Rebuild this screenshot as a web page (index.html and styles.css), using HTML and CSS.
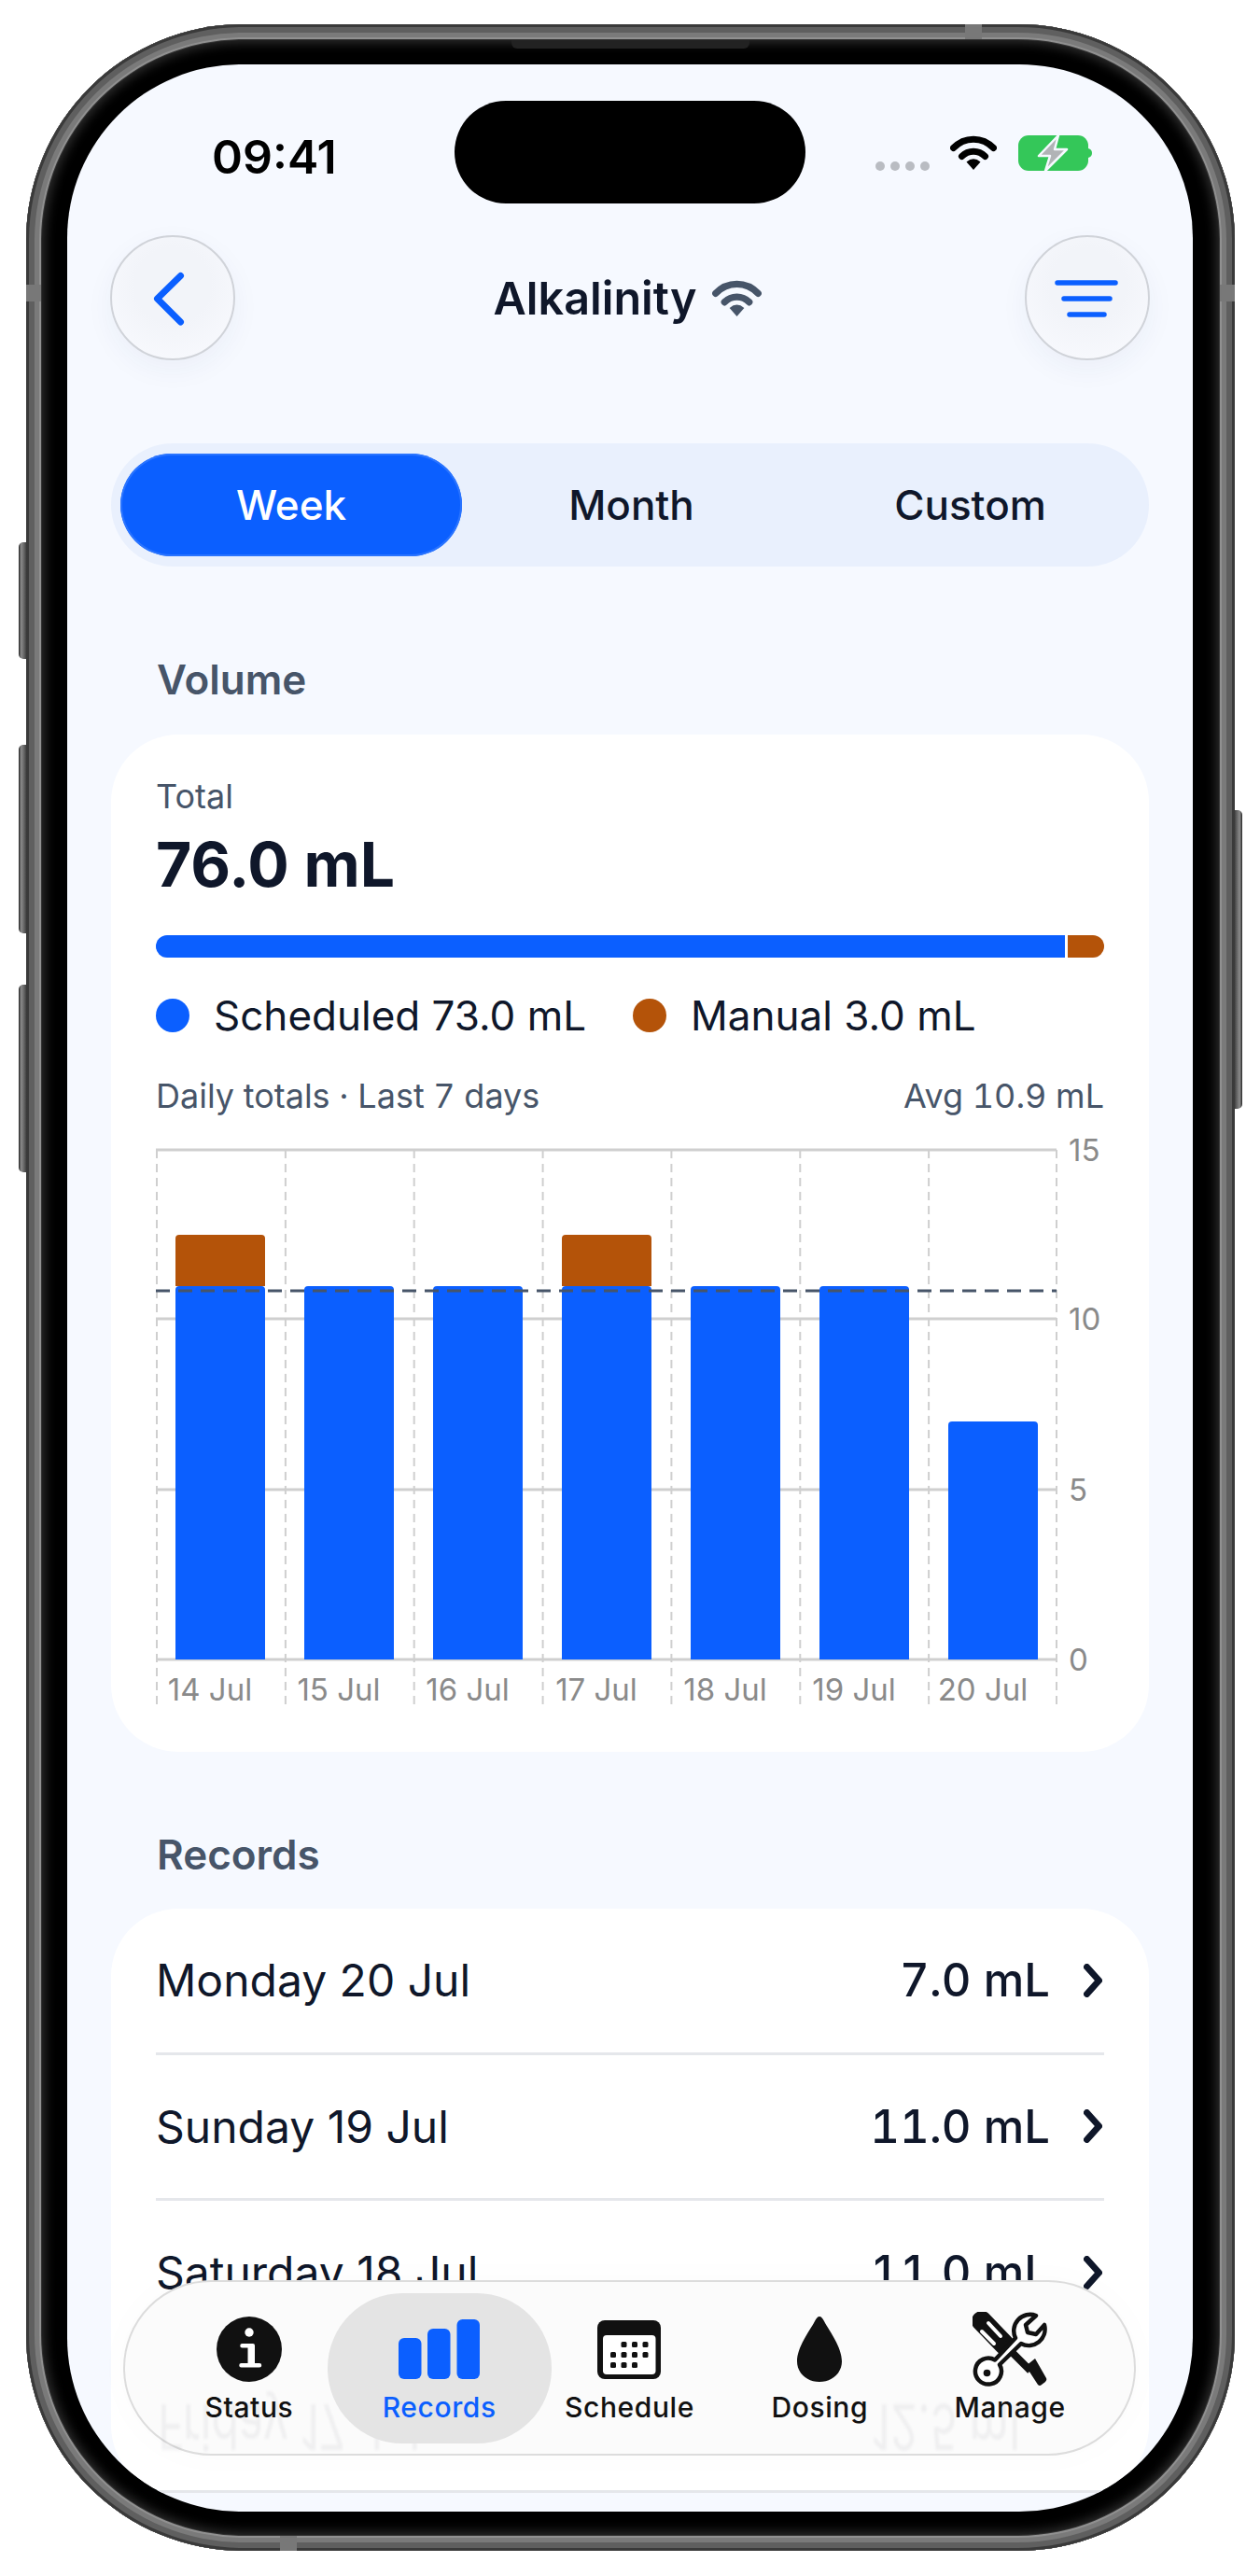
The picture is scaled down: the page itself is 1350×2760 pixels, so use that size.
FILE: index.html
```html
<!DOCTYPE html>
<html>
<head>
  <title>Alkalinity</title>
  <link rel="stylesheet" href="styles.css">
</head>
<body>
  <div class="phone">
    <!-- Hardware bits around the frame -->
    <span class="side-btn btn-action"></span>
    <span class="side-btn btn-up"></span>
    <span class="side-btn btn-down"></span>
    <span class="side-btn btn-power"></span>
    <span class="band band-top"></span>
    <span class="band band-left"></span>
    <span class="band band-right"></span>
    <span class="band band-bottom"></span>
    <span class="speaker"></span>

    <div class="screen">
      <!-- Status bar -->
      <div class="status-bar">
        <div class="time">09:41</div>
        <div class="island"></div>
        <div class="status-icons">
          <div class="signal-dots"><i></i><i></i><i></i><i></i></div>
          <svg class="status-wifi" viewBox="0 0 50 37"><path class="wifi-arc" d="M3.5 13.5C15.5 1 34.5 1 46.5 13.5"/><path class="wifi-arc" d="M12.5 22.5C19.5 15.5 30.5 15.5 37.5 22.5"/><path class="wifi-dot" d="M25 37L17.5 28.5Q25 22 32.5 28.5Z"/></svg>
          <svg class="battery" viewBox="0 0 80 40"><rect class="battery-body" x="0" y="1" width="75" height="38" rx="11"/><path class="battery-body" d="M75 15q4 1 4 5t-4 5z"/><path class="battery-bolt" d="M43 1L22 23H34L29 39L52 16H39Z"/></svg>
        </div>
      </div>

      <!-- Header -->
      <div class="header">
        <button class="round-btn">
          <svg viewBox="0 0 130 130"><path class="back-arrow" d="M73.5 41.5L48.5 66L73.5 91"/></svg>
        </button>
        <div class="title">
          Alkalinity
          <svg class="title-wifi" viewBox="0 0 50 37"><path class="wifi-arc" d="M3.5 13.5C15.5 1 34.5 1 46.5 13.5"/><path class="wifi-arc" d="M12.5 22.5C19.5 15.5 30.5 15.5 37.5 22.5"/><path class="wifi-dot" d="M25 37L17.5 28.5Q25 22 32.5 28.5Z"/></svg>
        </div>
        <button class="round-btn">
          <svg viewBox="0 0 130 130"><path class="filter-lines" d="M33 49H95M40 66H89M46 83H83"/></svg>
        </button>
      </div>

      <div class="content">
        <!-- Range switch -->
        <div class="segments">
          <div class="segment active">Week</div>
          <div class="segment">Month</div>
          <div class="segment">Custom</div>
        </div>

        <!-- Volume -->
        <div class="section-label">Volume</div>
        <div class="card volume-card">
          <div class="total-label">Total</div>
          <div class="total-value">76.0 mL</div>
          <div class="total-bar">
            <div class="bar-scheduled"></div>
            <div class="bar-manual"></div>
          </div>
          <div class="legend">
            <div class="legend-item"><span class="dot dot-blue"></span>Scheduled 73.0 mL</div>
            <div class="legend-item"><span class="dot dot-orange"></span>Manual 3.0 mL</div>
          </div>
          <div class="chart-head">
            <span>Daily totals · Last 7 days</span>
            <span>Avg 10.9 mL</span>
          </div>
          <svg class="chart" viewBox="0 0 1016 630">
            <path class="grid-h" d="M0 22H965M0 203H965M0 386H965M0 568H965"/>
            <path class="grid-v" d="M1 22V617M138.9 22V617M276.7 22V617M414.6 22V617M552.4 22V617M690.3 22V617M828.1 22V617M965 22V617"/>
            <path class="bar-blue" d="M21 568V172q0-4 4-4h88q4 0 4 4V568Z"/>
            <path class="bar-orange" d="M21 168V117q0-4 4-4h88q4 0 4 4V168Z"/>
            <path class="bar-blue" d="M159 568V172q0-4 4-4h88q4 0 4 4V568Z"/>
            <path class="bar-blue" d="M297 568V172q0-4 4-4h88q4 0 4 4V568Z"/>
            <path class="bar-blue" d="M435 568V172q0-4 4-4h88q4 0 4 4V568Z"/>
            <path class="bar-orange" d="M435 168V117q0-4 4-4h88q4 0 4 4V168Z"/>
            <path class="bar-blue" d="M573 568V172q0-4 4-4h88q4 0 4 4V568Z"/>
            <path class="bar-blue" d="M711 568V172q0-4 4-4h88q4 0 4 4V568Z"/>
            <path class="bar-blue" d="M849 568V317q0-4 4-4h88q4 0 4 4V568Z"/>
            <path class="avg-line" d="M0 173H965"/>
            <text class="axis-x" x="58" y="612">14 Jul</text>
            <text class="axis-x" x="196" y="612">15 Jul</text>
            <text class="axis-x" x="334" y="612">16 Jul</text>
            <text class="axis-x" x="472" y="612">17 Jul</text>
            <text class="axis-x" x="610" y="612">18 Jul</text>
            <text class="axis-x" x="748" y="612">19 Jul</text>
            <text class="axis-x" x="886" y="612">20 Jul</text>
            <text class="axis-y" x="978" y="34">15</text>
            <text class="axis-y" x="978" y="215">10</text>
            <text class="axis-y" x="978" y="398">5</text>
            <text class="axis-y" x="978" y="580">0</text>
          </svg>
        </div>

        <!-- Records -->
        <div class="section-label records-label">Records</div>
        <div class="card records-card">
          <div class="row"><span>Monday 20 Jul</span><span class="row-value">7.0 mL</span><svg class="chevron" viewBox="0 0 20 36"><path d="M3.5 3.5L16.5 18L3.5 32.5"/></svg></div>
          <div class="row"><span>Sunday 19 Jul</span><span class="row-value">11.0 mL</span><svg class="chevron" viewBox="0 0 20 36"><path d="M3.5 3.5L16.5 18L3.5 32.5"/></svg></div>
          <div class="row"><span>Saturday 18 Jul</span><span class="row-value">11.0 mL</span><svg class="chevron" viewBox="0 0 20 36"><path d="M3.5 3.5L16.5 18L3.5 32.5"/></svg></div>
          <div class="row"></div>
        </div>
      </div>

      <!-- Floating tab bar -->
      <div class="tab-bar">
        <div class="tab-ghost"><span>Friday 17 Jul</span><span class="ghost-value">12.5 mL</span></div>

        <div class="tab">
          <div class="tab-icon">
            <svg width="70" height="70" viewBox="0 0 70 70"><circle cx="35" cy="35" r="35" fill="#111"/><circle cx="35" cy="17" r="4.7" fill="#fff"/><path fill="#fff" d="M27.5 29h11.5a2 2 0 0 1 2 2v19h5a2 2 0 0 1 0 4.5H26.5a2 2 0 0 1 0-4.5h7V33.5h-6a2.2 2.2 0 0 1 0-4.500z"/></svg>
          </div>
          <div class="tab-name">Status</div>
        </div>

        <div class="tab active">
          <div class="tab-icon">
            <svg width="88" height="64" viewBox="0 0 88 64" fill="#0b5fff"><rect x="0" y="20" width="24.5" height="44" rx="6"/><rect x="31" y="10" width="24.5" height="54" rx="6"/><rect x="62.5" y="0" width="24.5" height="64" rx="6"/></svg>
          </div>
          <div class="tab-name">Records</div>
        </div>

        <div class="tab">
          <div class="tab-icon">
            <svg width="68" height="63" viewBox="0 0 68 63"><rect width="68" height="63" rx="8" fill="#111"/><rect x="6" y="16" width="56.5" height="42" rx="4" fill="#fff"/><g fill="#111"><rect x="25.5" y="23" width="6" height="6" rx="1.5"/><rect x="37" y="23" width="6" height="6" rx="1.5"/><rect x="48.5" y="23" width="6" height="6" rx="1.5"/><rect x="14" y="34" width="6" height="6" rx="1.5"/><rect x="25.5" y="34" width="6" height="6" rx="1.5"/><rect x="37" y="34" width="6" height="6" rx="1.5"/><rect x="48.5" y="34" width="6" height="6" rx="1.5"/><rect x="14" y="45" width="6" height="6" rx="1.5"/><rect x="25.5" y="45" width="6" height="6" rx="1.5"/><rect x="37" y="45" width="6" height="6" rx="1.5"/></g></svg>
          </div>
          <div class="tab-name">Schedule</div>
        </div>

        <div class="tab">
          <div class="tab-icon">
            <svg width="48" height="70" viewBox="0 0 48 70"><path fill="#111" d="M24 0C26 0 27.5 2 29 5C35 16 48 33 48 48C48 61 37 70 24 70C11 70 0 61 0 48C0 33 13 16 19 5C20.5 2 22 0 24 0Z"/></svg>
          </div>
          <div class="tab-name">Dosing</div>
        </div>

        <div class="tab">
          <div class="tab-icon">
            <svg width="81" height="80" viewBox="0 0 81 80">
              <path d="M10 10L34 35" stroke="#111" stroke-width="22" stroke-linecap="round" fill="none"/>
              <path d="M33 34L62 63" stroke="#111" stroke-width="8" fill="none"/>
              <path d="M57 58L67 50L79 71Q80 73 78 75L74 78Q72 80 70 78Z" fill="#111"/>
              <path d="M17 12L30 26M10 21L23 34" stroke="#fff" stroke-width="4" stroke-linecap="round" fill="none"/>
              <path d="M68 4L57 14L59 22L68 24L77 14A17.5 17.5 0 0 1 52 34L29 56.5A14 14 0 1 1 24 51.5L46 28A17.5 17.5 0 0 1 68 4Z" fill="#fff" stroke="#111" stroke-width="4.5" stroke-linejoin="round"/>
              <circle cx="15.5" cy="65.5" r="3.8" fill="#111"/>
            </svg>
          </div>
          <div class="tab-name">Manage</div>
        </div>
      </div>
    </div>
  </div>
</body>
</html>
```

FILE: styles.css
```css
* {
  box-sizing: border-box;
}
body {
  margin: 0;
  padding: 26px 27px 27px 28px;
  background-color: #fff;
  font-family: Inter, "Noto Sans", sans-serif;
  color: #0f172a;
}

/* Phone frame */
.phone {
  position: relative;
  width: 1295px;
  height: 2707px;
  padding: 43px 45px 42px 44px;
  border-radius: 232px;
  background-color: #000;
  box-shadow:
    inset 0 0 0 3px #3a3a3a,
    inset 0 0 0 9px #5f5f5f,
    inset 0 0 0 14px #7a7a7a,
    inset 0 0 0 16px #909090,
    inset 0 0 0 17px #333,
    inset 0 0 12px 20px #2e2e2e;
}
.side-btn {
  position: absolute;
  left: -8px;
  width: 9px;
  border-radius: 5px 0 0 5px;
  background: linear-gradient(90deg, #222, #8c8c8c 30%, #5d5d5d 70%, #333);
}
.btn-action { top: 555px; height: 125px; }
.btn-up { top: 772px; height: 202px; }
.btn-down { top: 1029px; height: 201px; }
.btn-power {
  left: auto;
  right: -8px;
  top: 842px;
  height: 320px;
  border-radius: 0 5px 5px 0;
  background: linear-gradient(270deg, #222, #8c8c8c 30%, #5d5d5d 70%, #333);
}
.band {
  position: absolute;
  background-color: #787878;
}
.band-top { top: 0; left: 1006px; width: 18px; height: 16px; }
.band-bottom { bottom: 0; left: 272px; width: 18px; height: 16px; }
.band-left { left: 0; top: 279px; width: 16px; height: 18px; }
.band-right { right: 0; top: 279px; width: 16px; height: 18px; }
.speaker {
  position: absolute;
  top: 17px;
  left: 520px;
  width: 255px;
  height: 9px;
  border-radius: 0 0 6px 6px;
  background-color: #222;
}

/* Screen */
.screen {
  position: relative;
  height: 2622px;
  padding-top: 39px;
  overflow: hidden;
  border-radius: 186px;
  background-color: #f6f9ff;
}
.status-bar {
  display: grid;
  grid-template-columns: 415px 376px 415px;
  height: 110px;
}
.island {
  height: 110px;
  border-radius: 55px;
  background-color: #000;
}
.time {
  padding: 30px 0 0 155px;
  font-size: 50px;
  line-height: 60px;
  font-weight: 600;
  color: #000;
}
.status-icons {
  display: flex;
  align-items: flex-start;
  padding: 37px 0 0 75px;
}
.signal-dots {
  display: flex;
  gap: 6px;
  margin-top: 28px;
}
.signal-dots i {
  width: 10px;
  height: 10px;
  border-radius: 50%;
  background-color: #b9bcc2;
}
.status-wifi {
  width: 50px;
  height: 37px;
  margin-left: 22px;
  color: #000;
}
.battery {
  width: 80px;
  height: 40px;
  margin: -1px 0 0 23px;
}
.battery-body { fill: #34c759; }
.battery-bolt {
  fill: #b1b3b6;
  stroke: #f6f9ff;
  stroke-width: 2.5;
  stroke-linejoin: round;
}
.wifi-arc {
  fill: none;
  stroke: currentColor;
  stroke-width: 7;
  stroke-linecap: round;
}
.wifi-dot { fill: currentColor; }

/* Header */
.header {
  display: flex;
  justify-content: space-between;
  align-items: center;
  margin: 34px 46px 0;
}
.round-btn {
  display: flex;
  width: 134px;
  height: 134px;
  padding: 0;
  border: 2px solid #d0d3d9;
  border-radius: 50%;
  background: radial-gradient(circle at 50% 40%, #f2f4f9 40%, #fafbff 100%);
  box-shadow: 0 10px 30px rgba(30, 60, 120, 0.05);
}
.round-btn svg {
  width: 130px;
  height: 130px;
}
.back-arrow, .filter-lines {
  fill: none;
  stroke: #0b5fff;
  stroke-linecap: round;
  stroke-linejoin: round;
}
.back-arrow { stroke-width: 7; }
.filter-lines { stroke-width: 5.5; }
.title {
  display: flex;
  align-items: center;
  gap: 17px;
  padding-right: 5px;
  font-size: 48.5px;
  font-weight: 600;
}
.title-wifi {
  width: 53px;
  height: 39px;
  color: #475569;
}

/* Content */
.content {
  padding: 0 47px;
}
.segments {
  display: flex;
  height: 132px;
  margin-top: 89px;
  padding: 11px 10px;
  border-radius: 66px;
  background-color: #e9f0fd;
}
.segment {
  flex: 1;
  text-align: center;
  font-size: 44px;
  line-height: 110px;
  font-weight: 500;
}
.segment.active {
  flex: 0 0 366px;
  border-radius: 55px;
  background-color: #0b5fff;
  box-shadow: inset 0 0 0 2px #2a74ff;
  color: #fff;
}
.section-label {
  margin: 94px 0 32px 49px;
  font-size: 44px;
  line-height: 54px;
  font-weight: 600;
  color: #475569;
}
.records-label {
  margin: 83px 0 31px 49px;
}
.card {
  border-radius: 72px;
  background-color: #fff;
}
.volume-card {
  padding: 44px 48px 37px;
}
.total-label {
  font-size: 36px;
  line-height: 44px;
  color: #475569;
}
.total-value {
  margin-top: 11px;
  font-size: 66px;
  line-height: 80px;
  font-weight: 700;
}
.total-bar {
  display: flex;
  gap: 3px;
  height: 24px;
  margin-top: 36px;
}
.bar-scheduled {
  width: 974px;
  border-radius: 12px 0 0 12px;
  background-color: #0b5fff;
}
.bar-manual {
  flex: 1;
  border-radius: 0 12px 12px 0;
  background-color: #b45309;
}
.legend {
  display: flex;
  gap: 50px;
  margin-top: 35px;
  font-size: 44px;
  line-height: 54px;
}
.legend-item {
  display: flex;
  align-items: center;
}
.dot {
  width: 36px;
  height: 36px;
  margin-right: 26px;
  border-radius: 50%;
}
.dot-blue { background-color: #0b5fff; }
.dot-orange { background-color: #b45309; }
.chart-head {
  display: flex;
  justify-content: space-between;
  margin-top: 37px;
  font-size: 36px;
  line-height: 44px;
  font-variant-numeric: tabular-nums;
  color: #475569;
}
.chart {
  display: block;
  width: 1016px;
  height: 630px;
  margin-top: 14px;
}
.grid-h {
  fill: none;
  stroke: #cfcfcf;
  stroke-width: 3;
}
.grid-v {
  fill: none;
  stroke: #cfcfcf;
  stroke-width: 2;
  stroke-dasharray: 9 6;
}
.bar-blue { fill: #0b5fff; }
.bar-orange { fill: #b45309; }
.avg-line {
  fill: none;
  stroke: #475569;
  stroke-width: 3;
  stroke-dasharray: 15 9;
}
.axis-x, .axis-y {
  font-size: 33px;
  fill: #8a8a8a;
}
.axis-x { text-anchor: middle; }

/* Records list */
.records-card {
  padding: 0 48px;
}
.row {
  display: flex;
  align-items: center;
  height: 156.5px;
  border-bottom: 3px solid #e5e7eb;
  font-size: 48px;
}
.row span:first-child {
  flex: 1;
}
.row-value {
  font-size: 49px;
  font-weight: 500;
  font-variant-numeric: tabular-nums;
}
.chevron {
  width: 20px;
  height: 36px;
  margin: 0 2px 0 36px;
}
.chevron path {
  fill: none;
  stroke: #0f172a;
  stroke-width: 7;
  stroke-linecap: round;
  stroke-linejoin: round;
}

/* Tab bar */
.tab-bar {
  position: absolute;
  left: 60px;
  right: 61px;
  bottom: 60px;
  display: flex;
  height: 188px;
  padding: 0 31px;
  border: 2px solid #dcdcdc;
  border-radius: 94px;
  background-color: #fbfbfb;
  box-shadow: 0 0 40px rgba(0, 0, 0, 0.02);
}
.tab-ghost {
  position: absolute;
  left: 35px;
  right: 107px;
  top: 128px;
  display: flex;
  justify-content: space-between;
  font-size: 48px;
  line-height: 54px;
  color: rgba(15, 23, 42, 0.05);
  transform: scaleY(-1.4);
  filter: blur(1px);
}
.tab {
  position: relative;
  flex: 1;
  padding-top: 32px;
  text-align: center;
}
.tab.active::before {
  content: "";
  position: absolute;
  left: -18px;
  right: -18px;
  top: 12px;
  height: 161px;
  border-radius: 80px;
  background-color: #e4e4e4;
}
.tab-icon {
  position: relative;
  display: flex;
  justify-content: center;
  align-items: center;
  height: 80px;
}
.tab-name {
  position: relative;
  margin-top: 4px;
  font-size: 30px;
  line-height: 36px;
  font-weight: 500;
  letter-spacing: 0.6px;
  color: #111;
}
.tab.active .tab-name {
  color: #0b5fff;
}
```
